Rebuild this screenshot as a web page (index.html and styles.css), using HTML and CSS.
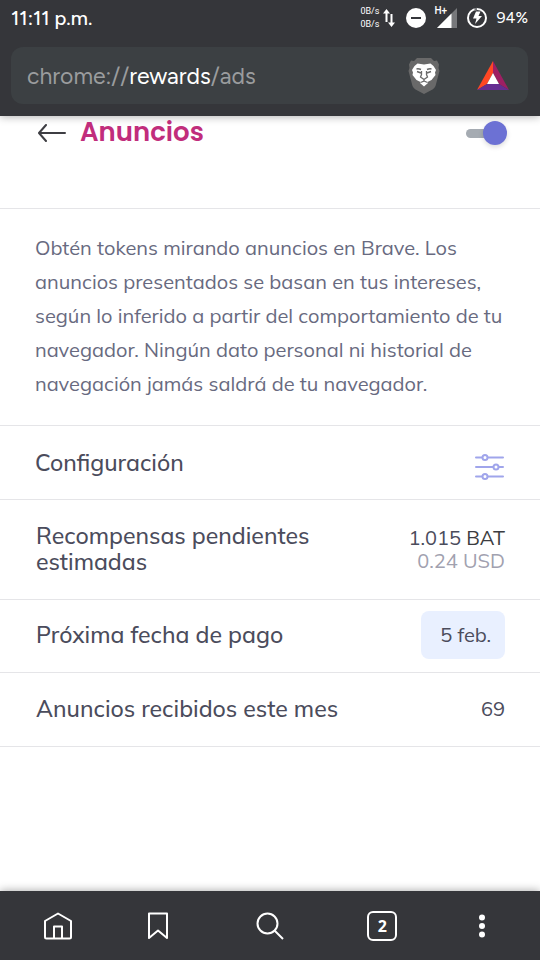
FILE: index.html
```html
<!DOCTYPE html>
<html lang="es">
<head>
<meta charset="utf-8">
<meta name="viewport" content="width=device-width, initial-scale=1">
<title>Anuncios</title>
<link rel="stylesheet" href="styles.css">
</head>
<body>
<header class="chrome">
  <div class="status">
    <span class="clock">11:11 p.m.</span>
    <div class="indicators">
      <div class="speed"><span>0B/s</span><span>0B/s</span></div>
      <svg class="updown" width="12" height="18" viewBox="0 0 12 18" fill="#fff"><path d="M3.500 0L7 4.500H4.500V13h-2V4.500H0zM7.500 5h2v8.500H12L8.500 18 5 13.500h2.500z"/></svg>
      <svg class="dnd" width="20" height="20" viewBox="0 0 20 20"><circle cx="10" cy="10" r="10" fill="#fff"/><path d="M5 10h10" stroke="#35363a" stroke-width="2"/></svg>
      <div class="signal">
        <span class="network">H+</span>
        <svg width="20" height="20" viewBox="0 0 20 20"><path d="M20 0v20H0z" fill="#77787b"/><path d="M14.500 5.500V20H0z" fill="#fff"/></svg>
      </div>
      <svg class="battery" width="22" height="22" viewBox="0 0 22 22"><circle cx="11" cy="11" r="9" fill="none" stroke="#fff" stroke-width="2"/><path d="M8.500 2.500A9 9 0 0 1 11 2" stroke="#77787b" stroke-width="2.500" fill="none"/><path d="M10 4.500h4.500L12.500 9H16l-7 8 1.500-5.500H7z" fill="#fff"/></svg>
      <span class="percent">94%</span>
    </div>
  </div>
  <div class="address">
    <a class="url" href="chrome://rewards/ads">chrome://<strong>rewards</strong>/ads</a>
    <button class="plain" aria-label="Brave Shields">
      <svg width="32" height="36" viewBox="0 0 32 36">
        <path d="M9 0h14l3 3 3-.5 2 4L30.500 10l1 3-4 15q-1 2-3 3.500L16 36l-8.500-4.500q-2-1.500-3-3.500L.5 13l1-3L1 6.500 3 2.500 6 3z" fill="#696969"/>
        <path d="M9.500 5.500l6.500 1 6.500-1 3 2.500 2.500 4-1 2.500.5 2.500-4 5-4 2 .5 1-4 3.500-4-3.500.5-1-4-2-4-5 .5-2.500-1-2.500 2.500-4z" fill="#fff"/>
        <path d="M8.500 11q2-.5 4.500.5M23.500 11q-2-.5-4.500.5M9 13.500l4 1.500M23 13.500l-4 1.500" fill="none" stroke="#696969" stroke-width="1.500"/>
        <path d="M13.500 13v3.500L12.500 19l3.500 2.500 3.500-2.500-1-2.500V13M16 21v2l-3.500 1.500M16 23l3.500 1.500" fill="none" stroke="#696969" stroke-width="1.300"/>
      </svg>
    </button>
    <button class="plain" aria-label="Brave Rewards">
      <svg width="34" height="30" viewBox="0 0 34 30"><path d="M17 0v12L11 23 1 29z" fill="#ff4724"/><path d="M17 0l16 29-10-6-6-11z" fill="#9e1f63"/><path d="M11 23h12l10 6H1z" fill="#662d91"/><path d="M17 12l6 11H11z" fill="#fff"/></svg>
    </button>
  </div>
</header>
<main>
  <div class="heading">
    <button class="plain" aria-label="Volver">
      <svg width="28" height="18" viewBox="0 0 28 18" fill="none" stroke="#3e3e43" stroke-width="2" stroke-linecap="round" stroke-linejoin="round"><path d="M8 1L1 9l7 8M1 9h26"/></svg>
    </button>
    <h1>Anuncios</h1>
    <input class="toggle" type="checkbox" checked aria-label="Anuncios">
  </div>
  <p class="description">Obtén tokens mirando anuncios en Brave. Los anuncios presentados se basan en tus intereses, según lo inferido a partir del comportamiento de tu navegador. Ningún dato personal ni historial de navegación jamás saldrá de tu navegador.</p>
  <section class="row config">
    <h2>Configuración</h2>
    <button class="plain settings" aria-label="Abrir configuración">
      <svg width="30" height="26" viewBox="0 0 30 26" fill="#fff" stroke="#a0a5eb" stroke-width="2" stroke-linecap="round"><path d="M1 3.500h27M1 13h27M1 22.500h27"/><circle cx="10" cy="3.500" r="2.500"/><circle cx="21" cy="13" r="2.500"/><circle cx="10" cy="22.500" r="2.500"/></svg>
    </button>
  </section>
  <section class="row tall">
    <h2>Recompensas pendientes estimadas</h2>
    <div class="amounts"><span>1.015 <span class="unit">BAT</span></span><span class="converted">0.24 USD</span></div>
  </section>
  <section class="row payment">
    <h2>Próxima fecha de pago</h2>
    <span class="date">5 feb.</span>
  </section>
  <section class="row">
    <h2>Anuncios recibidos este mes</h2>
    <span class="value">69</span>
  </section>
</main>
<nav class="bottom" aria-label="Navegador">
  <button class="plain" aria-label="Inicio"><svg width="28" height="28" viewBox="0 0 28 28" fill="none" stroke="#fff" stroke-width="2" stroke-linejoin="round"><path d="M14 1.500L27 9v16q0 1.500-1.500 1.500h-23Q1 26.500 1 25V9zM10 26V14.500h8V26"/></svg></button>
  <button class="plain" aria-label="Marcadores"><svg width="20" height="28" viewBox="0 0 20 28" fill="none" stroke="#fff" stroke-width="2" stroke-linejoin="round"><path d="M1 1.500h18v24.500l-9-7.500L1 26z"/></svg></button>
  <button class="plain" aria-label="Buscar"><svg width="28" height="28" viewBox="0 0 28 28" fill="none" stroke="#fff" stroke-width="2"><circle cx="11.500" cy="11.500" r="10"/><path d="M18.500 18.500L27 27"/></svg></button>
  <button class="plain" aria-label="Pestañas: 2"><span class="tabs">2</span></button>
  <button class="plain" aria-label="Menú"><svg width="8" height="24" viewBox="0 0 8 24" fill="#fff"><circle cx="4" cy="3.500" r="3"/><circle cx="4" cy="12" r="3"/><circle cx="4" cy="20.500" r="3"/></svg></button>
</nav>
</body>
</html>
```
FILE: styles.css
```css
* { box-sizing: border-box; }
body {
  margin: 0;
  min-height: 100vh;
  display: flex;
  flex-direction: column;
  background: #fff;
  color: #4b4c5c;
  font: 20px/24px "Mulish", "Muli", "Noto Sans", sans-serif;
}
h1, h2, p { margin: 0; }
.plain {
  padding: 0;
  border: 0;
  background: none;
  display: flex;
  align-items: center;
  justify-content: center;
}
svg { display: block; flex: none; }

.chrome {
  background: #35363a;
  padding: 0 12px 12px 11px;
  box-shadow: 0 1px 8px rgba(0, 0, 0, .3);
}
.status {
  height: 47px;
  padding-bottom: 11px;
  display: flex;
  align-items: center;
  justify-content: space-between;
  color: #fff;
}
.clock { font: 500 20px/24px "Google Sans", "Product Sans", Figtree, Outfit, Roboto, sans-serif; }
.indicators { display: flex; align-items: center; }
.speed {
  display: flex;
  flex-direction: column;
  font: 9px/13px Roboto, sans-serif;
}
.updown { margin: 0 11px 0 4px; }
.signal {
  width: 22px;
  margin: 0 9px 0 9px;
  position: relative;
  display: flex;
  justify-content: flex-end;
}
.network {
  position: absolute;
  left: -1px;
  top: -3px;
  font: 500 10px/12px Roboto, sans-serif;
}
.battery { margin-right: 8px; }
.percent { font: 16px/24px "Google Sans", "Product Sans", Figtree, Outfit, Roboto, sans-serif; }

.address {
  min-height: 57px;
  padding: 0 18px 0 16px;
  border-radius: 12px;
  background: #3c4043;
  display: flex;
  align-items: center;
  gap: 36px;
}
.url {
  flex: 1;
  color: #9a9c9e;
  font: 23px/30px "Google Sans", "Product Sans", Figtree, Outfit, Roboto, sans-serif;
  text-decoration: none;
}
.url strong { color: #fff; font-weight: 400; }

main { flex: 1; }
.heading {
  height: 93px;
  padding: 0 33px 0 38px;
  border-bottom: 1px solid #e5e5e8;
  display: flex;
  align-items: flex-start;
}
.heading .plain { height: 34px; }
h1 {
  flex: 1;
  margin-left: 14px;
  color: #c12d7c;
  font: 600 26px/32px "Poppins", Inter, sans-serif;
}
.toggle {
  appearance: none;
  height: 24px;
  margin: 5px 0 0;
  display: flex;
  align-items: center;
}
.toggle::before {
  content: "";
  width: 24px;
  height: 9px;
  margin-right: -7px;
  border-radius: 5px;
  background: #a5abb2;
}
.toggle::after {
  content: "";
  width: 24px;
  height: 24px;
  border-radius: 50%;
  background: #6c71d4;
  box-shadow: 0 2px 5px rgba(0, 0, 0, .15);
}
.description {
  padding: 22px 30px 24px 35px;
  border-bottom: 1px solid #e5e5e8;
  color: #686a80;
  line-height: 34px;
}
.row {
  min-height: 74px;
  padding: 10px 35px 12px 36px;
  border-bottom: 1px solid #e5e5e8;
  display: flex;
  align-items: center;
  justify-content: space-between;
  gap: 24px;
}
.config { padding: 12px 35px; }
.tall { min-height: 100px; }
.payment { min-height: 73px; }
h2 {
  max-width: 320px;
  font-size: 23px;
  line-height: 26px;
  font-weight: 500;
}
.settings { padding-top: 8px; }
.amounts {
  display: flex;
  flex-direction: column;
  text-align: right;
  line-height: 23px;
  white-space: nowrap;
}
.unit { color: #3b3c40; }
.converted { color: #a1a1af; }
.date {
  padding: 12px 14px 12px 19px;
  border-radius: 8px;
  background: #e9f0ff;
}

.bottom {
  min-height: 69px;
  padding: 0 8px;
  background: #35363a;
  box-shadow: 0 -1px 8px rgba(0, 0, 0, .3);
  display: grid;
  grid-template-columns: 4fr 4fr 5fr 4fr 4fr;
}
.tabs {
  width: 30px;
  height: 30px;
  border: 2px solid #fff;
  border-radius: 6px;
  color: #fff;
  font: 700 16px/26px "Noto Sans", sans-serif;
}
```
